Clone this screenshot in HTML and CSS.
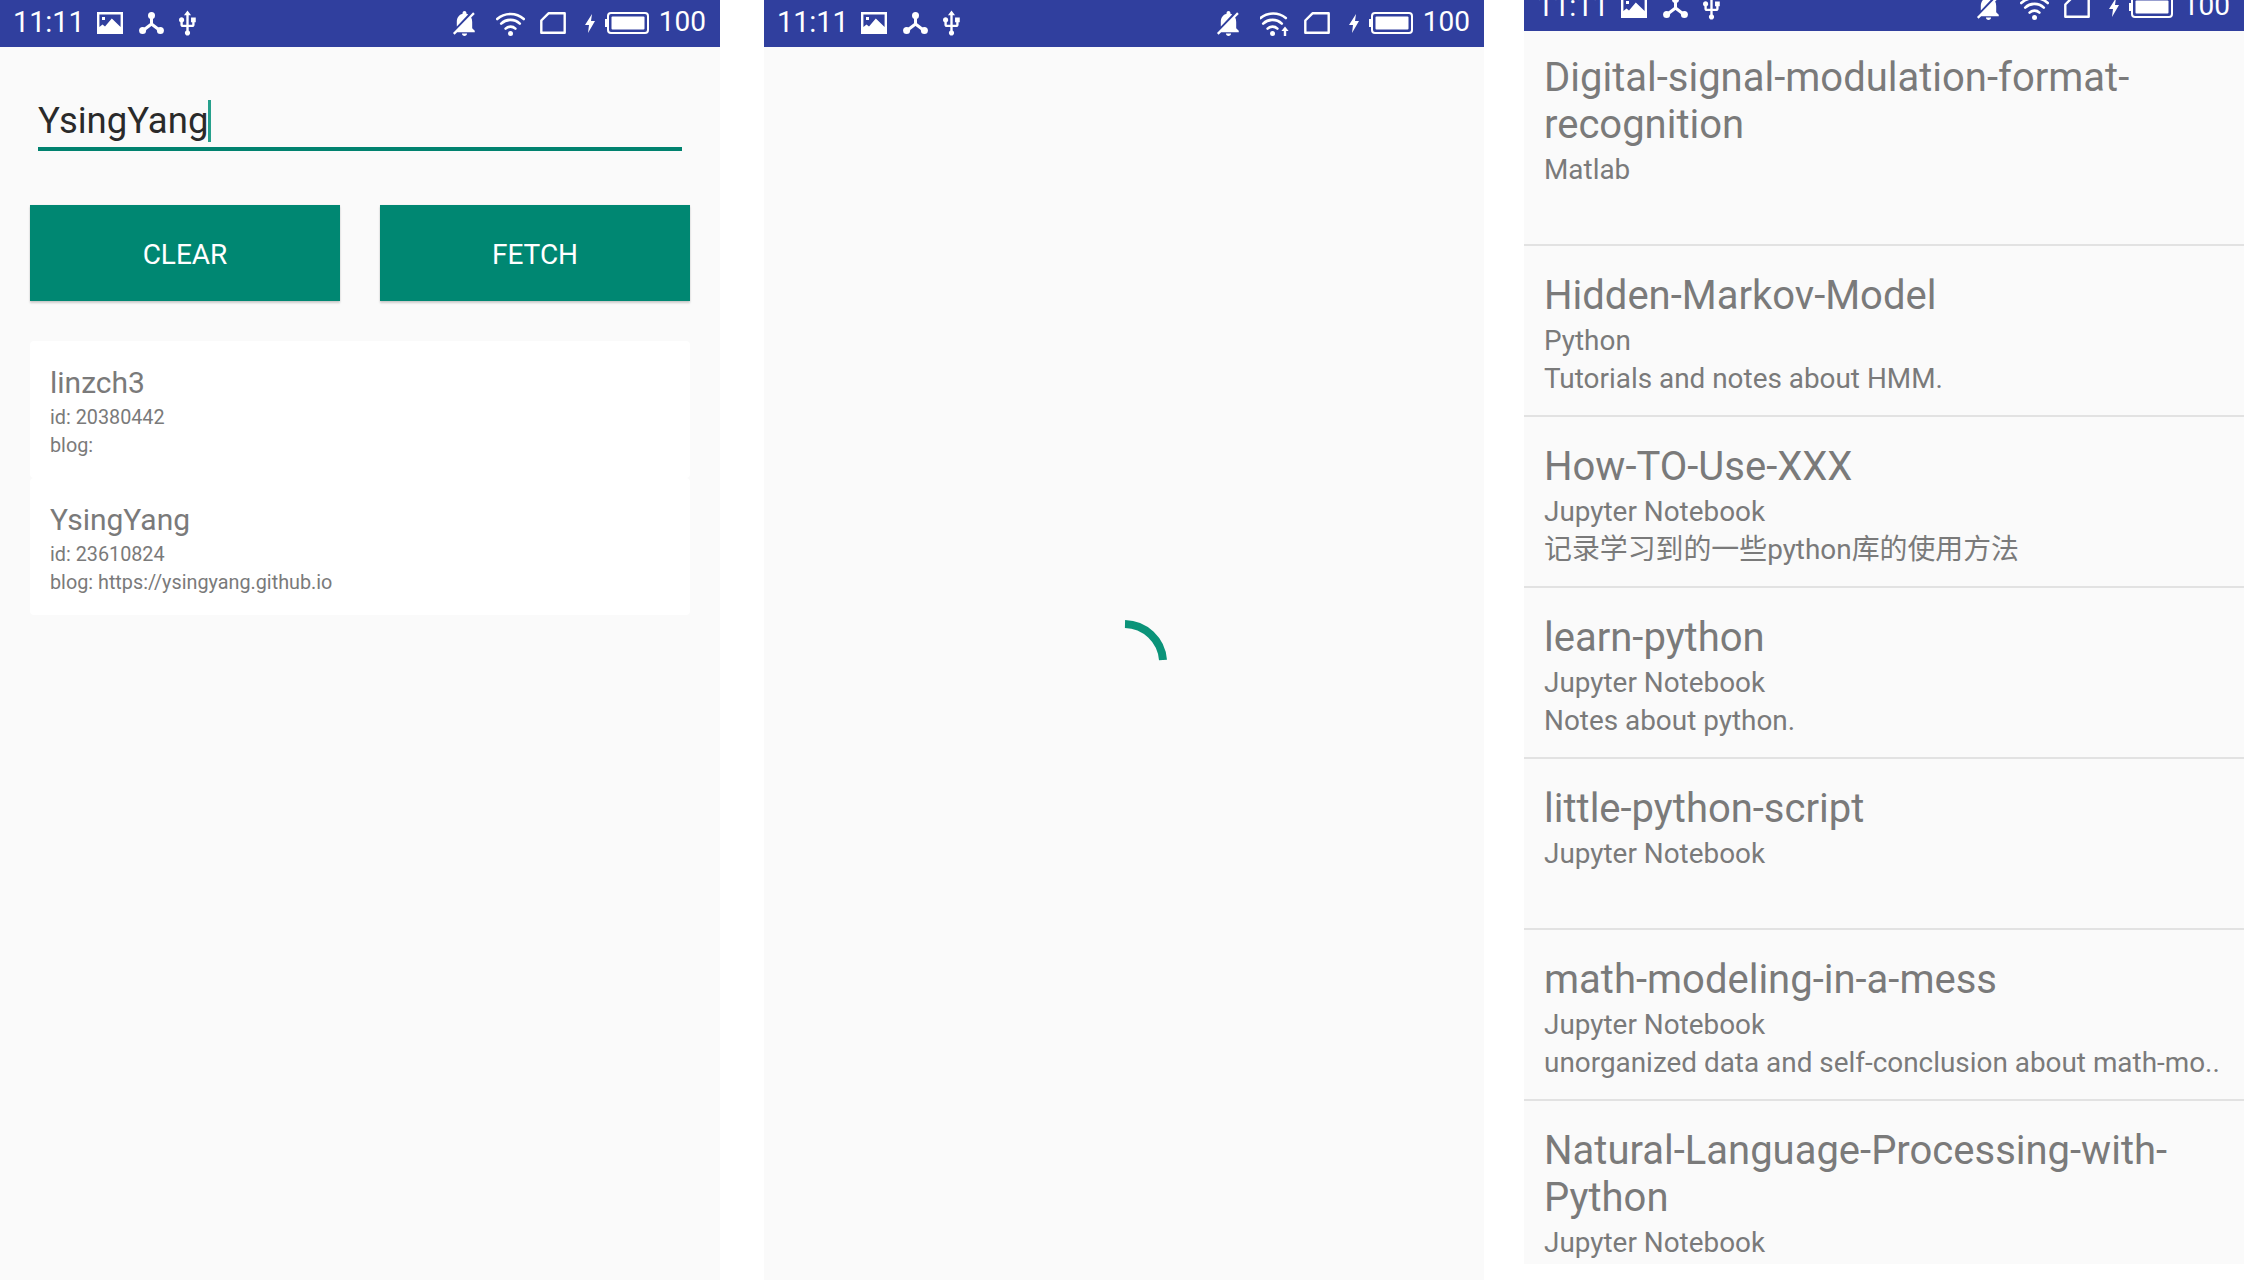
FILE: index.html
```html
<!DOCTYPE html>
<html lang="en">
<head>
<meta charset="utf-8">
<title>GitHub client</title>
<link rel="stylesheet" href="styles.css">
</head>
<body>
<svg class="defs" width="0" height="0" aria-hidden="true">
  <symbol id="i-image" viewBox="0 0 26 22">
    <path fill="#fff" fill-rule="evenodd" d="M0 0H26V22H0ZM2.4 2.4V15L5.5 12.6 8 14.5 14.8 6.5 23.6 15V2.4Z"/>
    <rect x="5" y="5" width="3" height="3" fill="#fff"/>
  </symbol>
  <symbol id="i-hub" viewBox="0 0 25 22">
    <path fill="none" stroke="#fff" stroke-width="3" d="M12.5 3V12M12.5 12L4 18.5M12.5 12L21 18.5"/>
    <circle cx="12.5" cy="3.5" r="3.5" fill="#fff"/><circle cx="3.6" cy="18.4" r="3.5" fill="#fff"/><circle cx="21.4" cy="18.4" r="3.5" fill="#fff"/>
  </symbol>
  <symbol id="i-usb" viewBox="4.8 0.8 14.4 21.6">
    <path fill="#fff" d="M15 7v4h1v2h-3V5h2l-3-4-3 4h2v8H8v-2.07c.7-.37 1.2-1.08 1.2-1.93 0-1.21-.99-2.2-2.2-2.2-1.21 0-2.2.99-2.2 2.2 0 .85.5 1.56 1.2 1.93V13c0 1.11.89 2 2 2h3v3.05c-.71.37-1.2 1.1-1.2 1.95 0 1.22.99 2.2 2.2 2.2 1.21 0 2.2-.98 2.2-2.2 0-.85-.49-1.58-1.2-1.95V15h3c1.11 0 2-.89 2-2v-2h1V7h-4z"/>
  </symbol>
  <symbol id="i-bell" viewBox="3 2.5 18 19.5">
    <g transform="matrix(-1 0 0 1 24 0)"><path fill="#fff" d="M20 18.69L7.84 6.14 5.27 3.49 4 4.76l2.8 2.8v.01c-.52.99-.8 2.16-.8 3.42v5l-2 2v1h13.73l2 2L21 19.72l-1-1.03zM12 22c1.11 0 2-.89 2-2h-4c0 1.11.89 2 2 2zm6-7.32V11c0-3.08-1.64-5.64-4.5-6.32V4c0-.83-.67-1.5-1.5-1.5s-1.5.67-1.5 1.5v.68c-.15.03-.29.08-.42.12-.1.03-.2.07-.3.11h-.01c-.2.08-.4.17-.59.27-.01 0-.01 0-.02.01L18 14.68z"/></g>
  </symbol>
  <symbol id="i-wifi" viewBox="0 0 29 25">
    <g fill="none" stroke="#fff" stroke-width="2.6" stroke-linecap="round">
      <path d="M9.6 17.6A7 7 0 0 1 19.4 17.6"/><path d="M5.2 12.6A13.5 13.5 0 0 1 23.8 12.6"/><path d="M1.2 8A20 20 0 0 1 27.8 8"/>
    </g>
    <circle cx="14.5" cy="22.5" r="2.5" fill="#fff"/>
  </symbol>
  <symbol id="i-wifi-up" viewBox="0 0 29 25">
    <g fill="none" stroke="#fff" stroke-width="2.6" stroke-linecap="round">
      <path d="M7.6 17.6A7 7 0 0 1 17.4 17.6"/><path d="M3.2 12.6A13.5 13.5 0 0 1 21.8 12.6"/><path d="M.6 7A20 20 0 0 1 25.8 7"/>
    </g>
    <circle cx="12.5" cy="22.5" r="2.5" fill="#fff"/>
    <path fill="#fff" d="M25 15.5L28.6 20H26.2V25H23.8V20H21.4Z"/>
  </symbol>
  <symbol id="i-sim" viewBox="0 0 26 22">
    <path fill="none" stroke="#fff" stroke-width="2.4" stroke-linejoin="round" d="M8.5 1.3H24.7V20.7H1.3V8.5Z"/>
  </symbol>
  <symbol id="i-bolt" viewBox="0 0 10 19">
    <path fill="#fff" d="M7 0L0 11H4L3 19L10 7H6Z"/>
  </symbol>
  <symbol id="i-battery" viewBox="0 0 44 22">
    <rect x="0" y="7" width="3" height="8" fill="#fff"/>
    <rect x="3" y="1" width="40" height="20" rx="3" fill="none" stroke="#fff" stroke-width="2"/>
    <rect x="6.5" y="4.5" width="33" height="13" rx="1" fill="#fff"/>
  </symbol>
</svg>

<main class="screens">
  <section class="phone">
    <header class="statusbar">
      <div class="status-group">
        <span class="clock">11:11</span>
        <svg class="ic ic-image"><use href="#i-image"/></svg>
        <svg class="ic ic-hub"><use href="#i-hub"/></svg>
        <svg class="ic ic-usb"><use href="#i-usb"/></svg>
      </div>
      <div class="status-group">
        <svg class="ic ic-bell"><use href="#i-bell"/></svg>
        <svg class="ic ic-wifi"><use href="#i-wifi"/></svg>
        <svg class="ic ic-sim"><use href="#i-sim"/></svg>
        <svg class="ic ic-bolt"><use href="#i-bolt"/></svg>
        <svg class="ic ic-battery"><use href="#i-battery"/></svg>
        <span class="level">100</span>
      </div>
    </header>
    <div class="search">
      <div class="field"><span>YsingYang</span><i class="caret"></i></div>
      <div class="actions">
        <button class="btn">CLEAR</button>
        <button class="btn">FETCH</button>
      </div>
      <div class="cards">
        <article class="card">
          <h2>linzch3</h2>
          <p>id: 20380442</p>
          <p>blog:</p>
        </article>
        <article class="card">
          <h2>YsingYang</h2>
          <p>id: 23610824</p>
          <p>blog: https://ysingyang.github.io</p>
        </article>
      </div>
    </div>
  </section>

  <section class="phone phone-mid">
    <header class="statusbar">
      <div class="status-group">
        <span class="clock">11:11</span>
        <svg class="ic ic-image"><use href="#i-image"/></svg>
        <svg class="ic ic-hub"><use href="#i-hub"/></svg>
        <svg class="ic ic-usb"><use href="#i-usb"/></svg>
      </div>
      <div class="status-group">
        <svg class="ic ic-bell"><use href="#i-bell"/></svg>
        <svg class="ic ic-wifi"><use href="#i-wifi-up"/></svg>
        <svg class="ic ic-sim"><use href="#i-sim"/></svg>
        <svg class="ic ic-bolt"><use href="#i-bolt"/></svg>
        <svg class="ic ic-battery"><use href="#i-battery"/></svg>
        <span class="level">100</span>
      </div>
    </header>
    <div class="loading">
      <svg class="spinner" viewBox="0 0 48 46"><path d="M2 4A39 39 0 0 1 40 40" fill="none" stroke="#0b9379" stroke-width="8"/></svg>
    </div>
  </section>

  <section class="phone phone-list">
    <header class="statusbar statusbar-scrolled">
      <div class="status-group">
        <span class="clock">11:11</span>
        <svg class="ic ic-image"><use href="#i-image"/></svg>
        <svg class="ic ic-hub"><use href="#i-hub"/></svg>
        <svg class="ic ic-usb"><use href="#i-usb"/></svg>
      </div>
      <div class="status-group">
        <svg class="ic ic-bell"><use href="#i-bell"/></svg>
        <svg class="ic ic-wifi"><use href="#i-wifi"/></svg>
        <svg class="ic ic-sim"><use href="#i-sim"/></svg>
        <svg class="ic ic-bolt"><use href="#i-bolt"/></svg>
        <svg class="ic ic-battery"><use href="#i-battery"/></svg>
        <span class="level">100</span>
      </div>
    </header>
    <div class="repos">
      <div class="repo-scroll">
        <article class="repo">
          <h3>Digital-signal-modulation-format-<br>recognition</h3>
          <p class="lang">Matlab</p>
          <p class="desc"></p>
        </article>
        <article class="repo">
          <h3>Hidden-Markov-Model</h3>
          <p class="lang">Python</p>
          <p class="desc">Tutorials and notes about HMM.</p>
        </article>
        <article class="repo">
          <h3>How-TO-Use-XXX</h3>
          <p class="lang">Jupyter Notebook</p>
          <p class="desc">记录学习到的一些python库的使用方法</p>
        </article>
        <article class="repo">
          <h3>learn-python</h3>
          <p class="lang">Jupyter Notebook</p>
          <p class="desc">Notes about python.</p>
        </article>
        <article class="repo">
          <h3>little-python-script</h3>
          <p class="lang">Jupyter Notebook</p>
          <p class="desc"></p>
        </article>
        <article class="repo">
          <h3>math-modeling-in-a-mess</h3>
          <p class="lang">Jupyter Notebook</p>
          <p class="desc">unorganized data and self-conclusion about math-mo..</p>
        </article>
        <article class="repo">
          <h3>Natural-Language-Processing-with-<br>Python</h3>
          <p class="lang">Jupyter Notebook</p>
          <p class="desc"></p>
        </article>
      </div>
    </div>
  </section>
</main>
</body>
</html>
```
FILE: styles.css
```css
* { box-sizing: border-box; }
html, body { margin: 0; padding: 0; background: #fff; }
body { font-family: Roboto, "Noto Sans CJK SC", sans-serif; }
.defs { display: block; height: 0; }
h2, h3, p { margin: 0; font-weight: 400; }

.screens { display: flex; align-items: flex-start; height: 1288px; overflow: hidden; }
.phone { width: 720px; height: 1280px; background: #fafafa; display: flex; flex-direction: column; overflow: hidden; flex: none; }
.phone-mid { margin-left: 44px; }
.phone-list { margin-left: 40px; height: 1264px; }

.statusbar { flex: none; height: 47px; background: #303f9e; color: #fff; display: flex; justify-content: space-between; align-items: center; padding: 0 14px 0 13px; overflow: hidden; }
.statusbar-scrolled { height: 31px; align-items: flex-start; }
.statusbar-scrolled .status-group { height: 47px; margin-top: -16px; flex: none; }
.status-group { display: flex; align-items: center; height: 47px; }
.clock, .level { line-height: 44px; height: 47px; }
.clock { font-size: 28.8px; }
.level { font-size: 28px; margin-left: 9.4px; }
.ic { display: block; flex: none; margin-top: -1px; }
.ic-image { width: 26px; height: 22px; margin-left: 12px; }
.ic-hub { width: 25px; height: 22px; margin-left: 16px; }
.ic-usb { width: 17px; height: 26px; margin-left: 15px; }
.ic-bell { width: 25px; height: 25px; }
.ic-wifi { width: 29px; height: 25px; margin-left: 19px; }
.ic-sim { width: 26px; height: 22px; margin-left: 14.4px; }
.ic-bolt { width: 10px; height: 19px; margin-left: 19.6px; }
.ic-battery { width: 44px; height: 22px; margin-left: 10px; }

.search { padding: 0 30px; }
.field { margin: 53px 8px 0; height: 51px; border-bottom: 4px solid #00826f; font-size: 36.5px; color: #2a2a2a; line-height: 42px; display: flex; align-items: flex-start; }
.caret { width: 3px; height: 42px; background: #26a08c; flex: none; }
.actions { display: grid; grid-template-columns: 310px 310px; gap: 40px; margin-top: 54px; }
.btn { height: 96px; border: 0; border-radius: 0; padding: 2px 0 0; background: #008772; color: #fff; font: 400 28px Roboto, sans-serif; box-shadow: 0 2px 2px rgba(0,0,0,.18), 0 0 1px rgba(0,0,0,.12); }
.cards { margin-top: 40px; }
.card { height: 137px; padding: 24px 20px 0; background: #fff; border-radius: 4px; color: #7a7a7a; }
.card h2 { font-size: 30px; line-height: 36px; margin-bottom: 3px; }
.card p { font-size: 19.8px; line-height: 28px; }

.loading { flex: 1; display: flex; padding: 573px 0 0 359px; align-items: flex-start; }
.spinner { width: 48px; height: 46px; display: block; }

.repos { flex: 1; overflow: hidden; }
.repo-scroll { margin-top: -3px; }
.repo { padding: 26px 20px 0; border-bottom: 2px solid #e2e2e2; color: #7a7a7a; }
.repo h3 { font-size: 40px; line-height: 47px; font-weight: 400; margin-bottom: 3px; }
.lang, .desc { font-size: 27.9px; line-height: 38px; }
.desc { min-height: 38px; margin-bottom: 17px; white-space: nowrap; }
```
